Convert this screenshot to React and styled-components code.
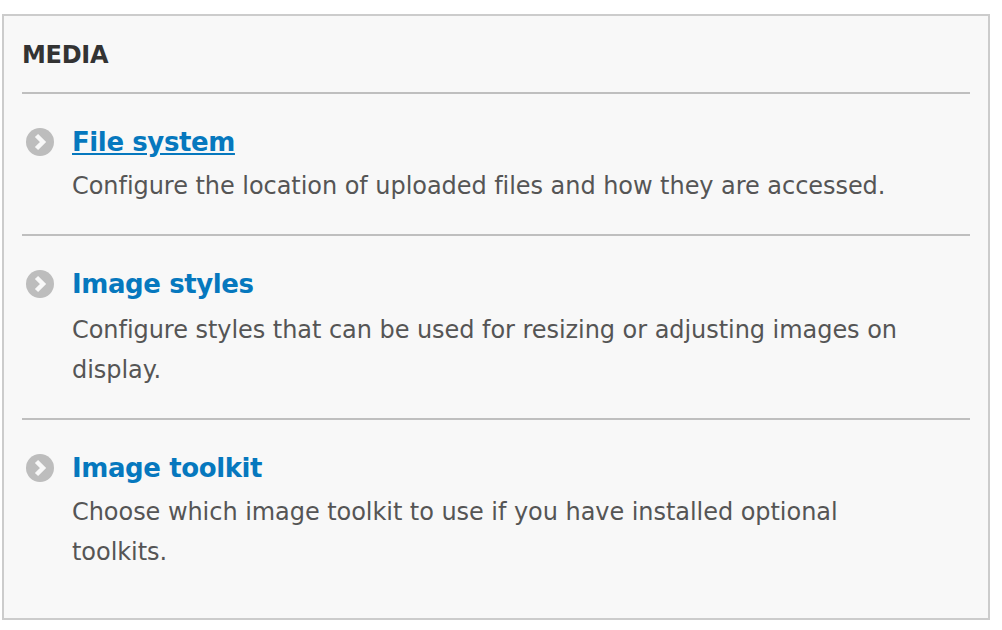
import React from "react";
import styled, { createGlobalStyle } from "styled-components";

const GlobalStyle = createGlobalStyle`
  html, body {
    margin: 0;
    padding: 0;
    background: #fff;
  }
`;

const items = [
  {
    title: "File system",
    active: true,
    gap: 8,
    text: "Configure the location of uploaded files and how they are accessed."
  },
  {
    title: "Image styles",
    gap: 10,
    text: "Configure styles that can be used for resizing or adjusting images on display."
  },
  {
    title: "Image toolkit",
    gap: 8,
    text: "Choose which image toolkit to use if you have installed optional toolkits."
  }
];

const Arrow = () => (
  <ArrowIcon viewBox="0 0 28 28">
    <circle cx="14" cy="14" r="14" fill="#bdbdbd" />
    <path
      d="M10.5 7.5 L17 14 L10.5 20.5"
      fill="none"
      stroke="#f8f8f8"
      strokeWidth="4.5"
    />
  </ArrowIcon>
);

const App = () => (
  <>
    <GlobalStyle />
    <Page>
      <Panel>
        <Heading>MEDIA</Heading>
        <List>
          {items.map(item => (
            <Item key={item.title}>
              <Title>
                <Arrow />
                <TitleLink href="#" $active={item.active}>
                  {item.title}
                </TitleLink>
              </Title>
              <Description $gap={item.gap}>{item.text}</Description>
            </Item>
          ))}
        </List>
      </Panel>
    </Page>
  </>
);

const Page = styled.div`
  padding: 14px 12px 10px 2px;
  font-family: "DejaVu Sans", "Liberation Sans", sans-serif;
`;

const Panel = styled.div`
  box-sizing: border-box;
  height: 606px;
  padding: 0 18px;
  background: #f8f8f8;
  border: 2px solid #ccc;
`;

const Heading = styled.h3`
  margin: 0;
  height: 78px;
  box-sizing: border-box;
  padding-top: 23px;
  font-size: 24px;
  line-height: 32px;
  font-weight: 700;
  color: #333;
  border-bottom: 2px solid #bfbfbf;
  letter-spacing: -0.3px;
`;

const List = styled.div`
  display: flex;
  flex-direction: column;
`;

const Item = styled.div`
  padding: 32px 0 28px;
  border-bottom: 2px solid #bfbfbf;

  &:last-child {
    border-bottom: 0;
  }
`;

const Title = styled.div`
  display: flex;
  align-items: center;
  gap: 18px;
  padding-left: 4px;
  height: 32px;
`;

const ArrowIcon = styled.svg`
  width: 28px;
  height: 28px;
  flex: none;
`;

const TitleLink = styled.a`
  font-size: 26px;
  line-height: 32px;
  font-weight: 700;
  letter-spacing: -0.4px;
  color: #0678be;
  text-decoration: ${props => (props.$active ? "underline" : "none")};
`;

const Description = styled.p`
  margin: ${props => props.$gap}px 38px 0 50px;
  font-size: 24px;
  line-height: 40px;
  color: #555;
  letter-spacing: -0.05px;
`;

export default App;
